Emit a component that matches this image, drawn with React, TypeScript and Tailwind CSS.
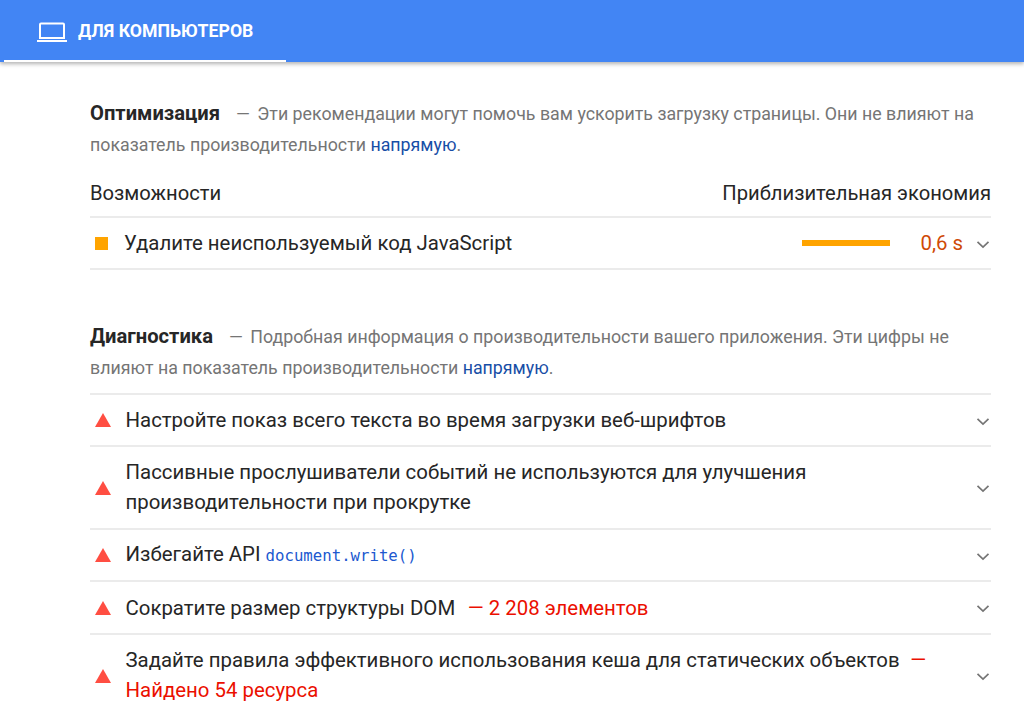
import React from "react";

function Chevron() {
  return (
    <svg width="14" height="9" viewBox="0 0 14 9" className="mt-[2px] shrink-0 ml-auto">
      <path d="M1.5 1.8 7 7 12.500 1.800" fill="none" stroke="#757575" strokeWidth="1.7" />
    </svg>
  );
}

function Tri() {
  return (
    <svg width="16" height="14" viewBox="0 0 16 14" className="shrink-0">
      <path d="M8 0 16 14H0Z" fill="#ff4e42" />
    </svg>
  );
}

function Row({ children, h, tall }: { children: React.ReactNode; h: string; tall?: boolean }) {
  return (
    <div className={`flex items-center border-b-2 border-[#ebebeb] pr-[1px] ${h}`}>
      <span className="ml-[5px] flex"><Tri /></span>
      <div className={`ml-[14.500px] w-[812px] text-[20.4px] leading-[30px] text-[#262626] ${tall ? "mb-[2px]" : ""}`}>{children}</div>
      <Chevron />
    </div>
  );
}

export default function App() {
  return (
    <div className="h-[703px] w-[1024px] overflow-hidden bg-white font-['Roboto',sans-serif]">
      <header className="h-[62px] bg-[#4285f4] pl-[4px] shadow-[0_2px_4px_rgba(0,0,0,0.3)]">
        <div className="flex h-[62px] w-[282px] items-center border-b-[2px] border-white pl-[32px] pt-[3px]">
          <svg width="32" height="24" viewBox="0 0 32 24" className="shrink-0">
            <path d="M5 3.500h22a1 1 0 0 1 1 1V18H4V4.500a1 1 0 0 1 1-1Z" fill="none" stroke="#fff" strokeWidth="2" />
            <path d="M1 20h30v2H1Z" fill="#fff" />
          </svg>
          <span className="ml-[10px] text-[17.7px] font-bold text-white">ДЛЯ КОМПЬЮТЕРОВ</span>
        </div>
      </header>

      <main className="ml-[90px] w-[901px]">
        <section className="pt-[36px]">
          <p className="text-[17.8px] leading-[31px] text-[#757575]">
            <span className="text-[20.2px] font-bold text-[#262626]">Оптимизация</span>
            <span className="ml-[16px]">—</span>
            <span className="ml-[3px]"> Эти рекомендации могут помочь вам ускорить загрузку страницы. Они не влияют на показатель производительности <span className="text-[#174ea6]">напрямую</span>.</span>
          </p>
          <div className="mt-[18px] flex h-[40px] items-start justify-between border-b-2 border-[#ebebeb] text-[20.2px] leading-[30px] text-[#262626]">
            <span>Возможности</span>
            <span>Приблизительная экономия</span>
          </div>
          <div className="flex h-[52px] items-center border-b-2 border-[#ebebeb] pr-[1px]">
            <span className="ml-[5px] h-[13px] w-[13px] bg-[#ffa400]" />
            <span className="ml-[16px] text-[20.4px] text-[#262626]">Удалите неиспользуемый код JavaScript</span>
            <span className="ml-auto h-[6px] w-[88px] bg-[#ffa400]" />
            <span className="ml-[30px] text-[20.4px] text-[#cf4a06]">0,6 s</span>
            <span className="ml-[13px] flex"><Chevron /></span>
          </div>
        </section>

        <section className="pt-[51px]">
          <p className="text-[17.8px] leading-[31px] text-[#757575]">
            <span className="text-[20.2px] font-bold text-[#262626]">Диагностика</span>
            <span className="ml-[16px]">—</span>
            <span className="ml-[3px]"> Подробная информация о производительности вашего приложения. Эти цифры не влияют на показатель производительности <span className="text-[#174ea6]">напрямую</span>.</span>
          </p>
          <div className="mt-[10px] border-t-2 border-[#ebebeb]">
            <Row h="h-[52px]">Настройте показ всего текста во время загрузки веб-шрифтов</Row>
            <Row h="h-[83px]" tall>Пассивные прослушиватели событий не используются для улучшения производительности при прокрутке</Row>
            <Row h="h-[52px]">Избегайте API <code className="font-['DejaVu_Sans_Mono',monospace] text-[15.7px] text-[#2058cf]">document.write()</code></Row>
            <Row h="h-[53px]">Сократите размер структуры DOM <span className="ml-[7.500px] text-[#eb0f00]">— 2 208 элементов</span></Row>
            <Row h="h-[83px]" tall>Задайте правила эффективного использования кеша для статических объектов <span className="ml-[5.500px] text-[#eb0f00]">— Найдено 54 ресурса</span></Row>
          </div>
        </section>
      </main>
    </div>
  );
}
